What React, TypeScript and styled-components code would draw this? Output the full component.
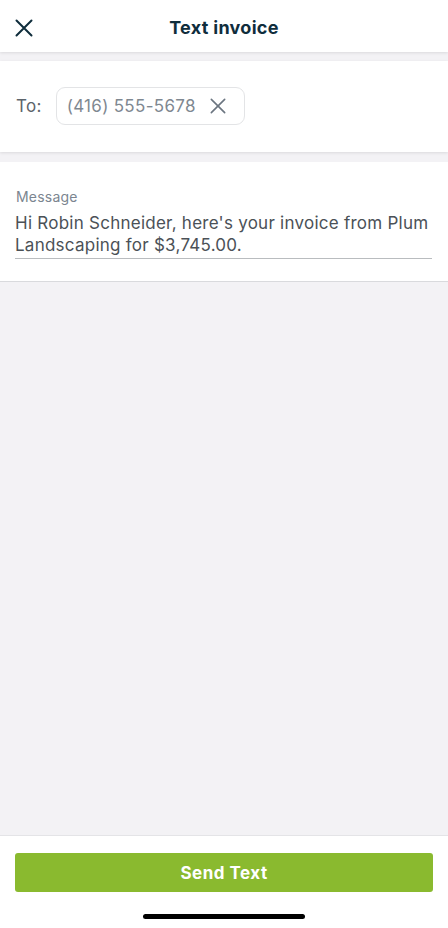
import React from "react"
import styled, { createGlobalStyle } from "styled-components"

const GlobalStyle = createGlobalStyle`
  html, body {
    margin: 0;
    padding: 0;
    background: #f3f2f5;
    font-family: Inter, "Noto Sans", sans-serif;
  }
  #root {
    min-height: 100vh;
  }
`

const CloseIcon = ({ size = 18, color = "#0f2d3c", stroke = 2 }: { size?: number; color?: string; stroke?: number }) => (
  <svg width={size} height={size} viewBox="0 0 18 18" fill="none">
    <path d="M1.5 1.5 L16.5 16.5 M16.5 1.5 L1.5 16.5" stroke={color} strokeWidth={stroke} strokeLinecap="round" />
  </svg>
)

const App = () => {
  return (
    <>
      <GlobalStyle />
      <Page>
        <Header>
          <HeaderButton aria-label="Close">
            <CloseIcon />
          </HeaderButton>
          <Title>Text invoice</Title>
        </Header>

        <Section>
          <ToRow>
            <ToLabel>To:</ToLabel>
            <Chip>
              <ChipText>(416) 555-5678</ChipText>
              <ChipRemove aria-label="Remove">
                <CloseIcon size={16} color="#6b7580" stroke={1.8} />
              </ChipRemove>
            </Chip>
          </ToRow>
        </Section>

        <MessageSection>
          <FieldLabel>Message</FieldLabel>
          <MessageText>
            Hi Robin Schneider, here's your invoice from Plum Landscaping for $3,745.00.
          </MessageText>
        </MessageSection>

        <Spacer />

        <Footer>
          <SendButton>Send Text</SendButton>
          <HomeIndicator />
        </Footer>
      </Page>
    </>
  )
}

export default App

const Page = styled.div`
  display: flex;
  flex-direction: column;
  height: 928px;
  background: #f3f2f5;
`

const Header = styled.div`
  position: relative;
  display: flex;
  align-items: center;
  justify-content: center;
  height: 52px;
  padding-top: 3px;
  box-sizing: border-box;
  background: #ffffff;
  box-shadow: 0 1px 3px rgba(0, 0, 0, 0.1);
  z-index: 2;
`

const HeaderButton = styled.button`
  position: absolute;
  left: 15px;
  top: 19px;
  display: flex;
  padding: 0;
  border: none;
  background: none;
`

const Title = styled.h1`
  margin: 0;
  font-size: 18px;
  font-weight: 700;
  color: #0f2d3c;
  letter-spacing: 0.3px;
`

const Section = styled.div`
  margin-top: 9px;
  background: #ffffff;
  box-shadow: 0 1px 3px rgba(0, 0, 0, 0.1);
  padding: 26px 16px 27px;
`

const ToRow = styled.div`
  display: flex;
  align-items: center;
  gap: 14px;
`

const ToLabel = styled.span`
  font-size: 17px;
  color: #5d646b;
  letter-spacing: 0.3px;
`

const Chip = styled.div`
  display: flex;
  align-items: center;
  gap: 14px;
  height: 36px;
  padding: 0 18px 0 10px;
  border: 1px solid #e3e4e6;
  border-radius: 9px;
`

const ChipText = styled.span`
  font-size: 17px;
  color: #7f8891;
  letter-spacing: 0.3px;
`

const ChipRemove = styled.button`
  display: flex;
  padding: 0;
  border: none;
  background: none;
`

const MessageSection = styled.div`
  margin-top: 10px;
  background: #ffffff;
  border-bottom: 1px solid #d9dadd;
  padding: 25px 16px 22px 15px;
`

const FieldLabel = styled.div`
  font-size: 14px;
  line-height: 20px;
  color: #7b8590;
  margin-left: 1px;
  margin-bottom: 5px;
  letter-spacing: 0.2px;
`

const MessageText = styled.div`
  font-size: 17px;
  line-height: 22px;
  color: #4b5157;
  padding-bottom: 2px;
  border-bottom: 1px solid #b9bcbf;
  letter-spacing: 0.25px;
`

const Spacer = styled.div`
  flex: 1;
`

const Footer = styled.div`
  display: flex;
  flex-direction: column;
  align-items: center;
  background: #ffffff;
  border-top: 1px solid #e4e4e7;
  padding: 17px 15px 8px;
  height: 93px;
  box-sizing: border-box;
`

const SendButton = styled.button`
  width: 100%;
  height: 39px;
  border: none;
  border-radius: 3px;
  background: #8aba2f;
  color: #ffffff;
  font-family: Inter, "Noto Sans", sans-serif;
  font-size: 17px;
  font-weight: 700;
  letter-spacing: 0.5px;
`

const HomeIndicator = styled.div`
  margin-top: 22px;
  width: 162px;
  height: 5px;
  border-radius: 3px;
  background: #000000;
`
